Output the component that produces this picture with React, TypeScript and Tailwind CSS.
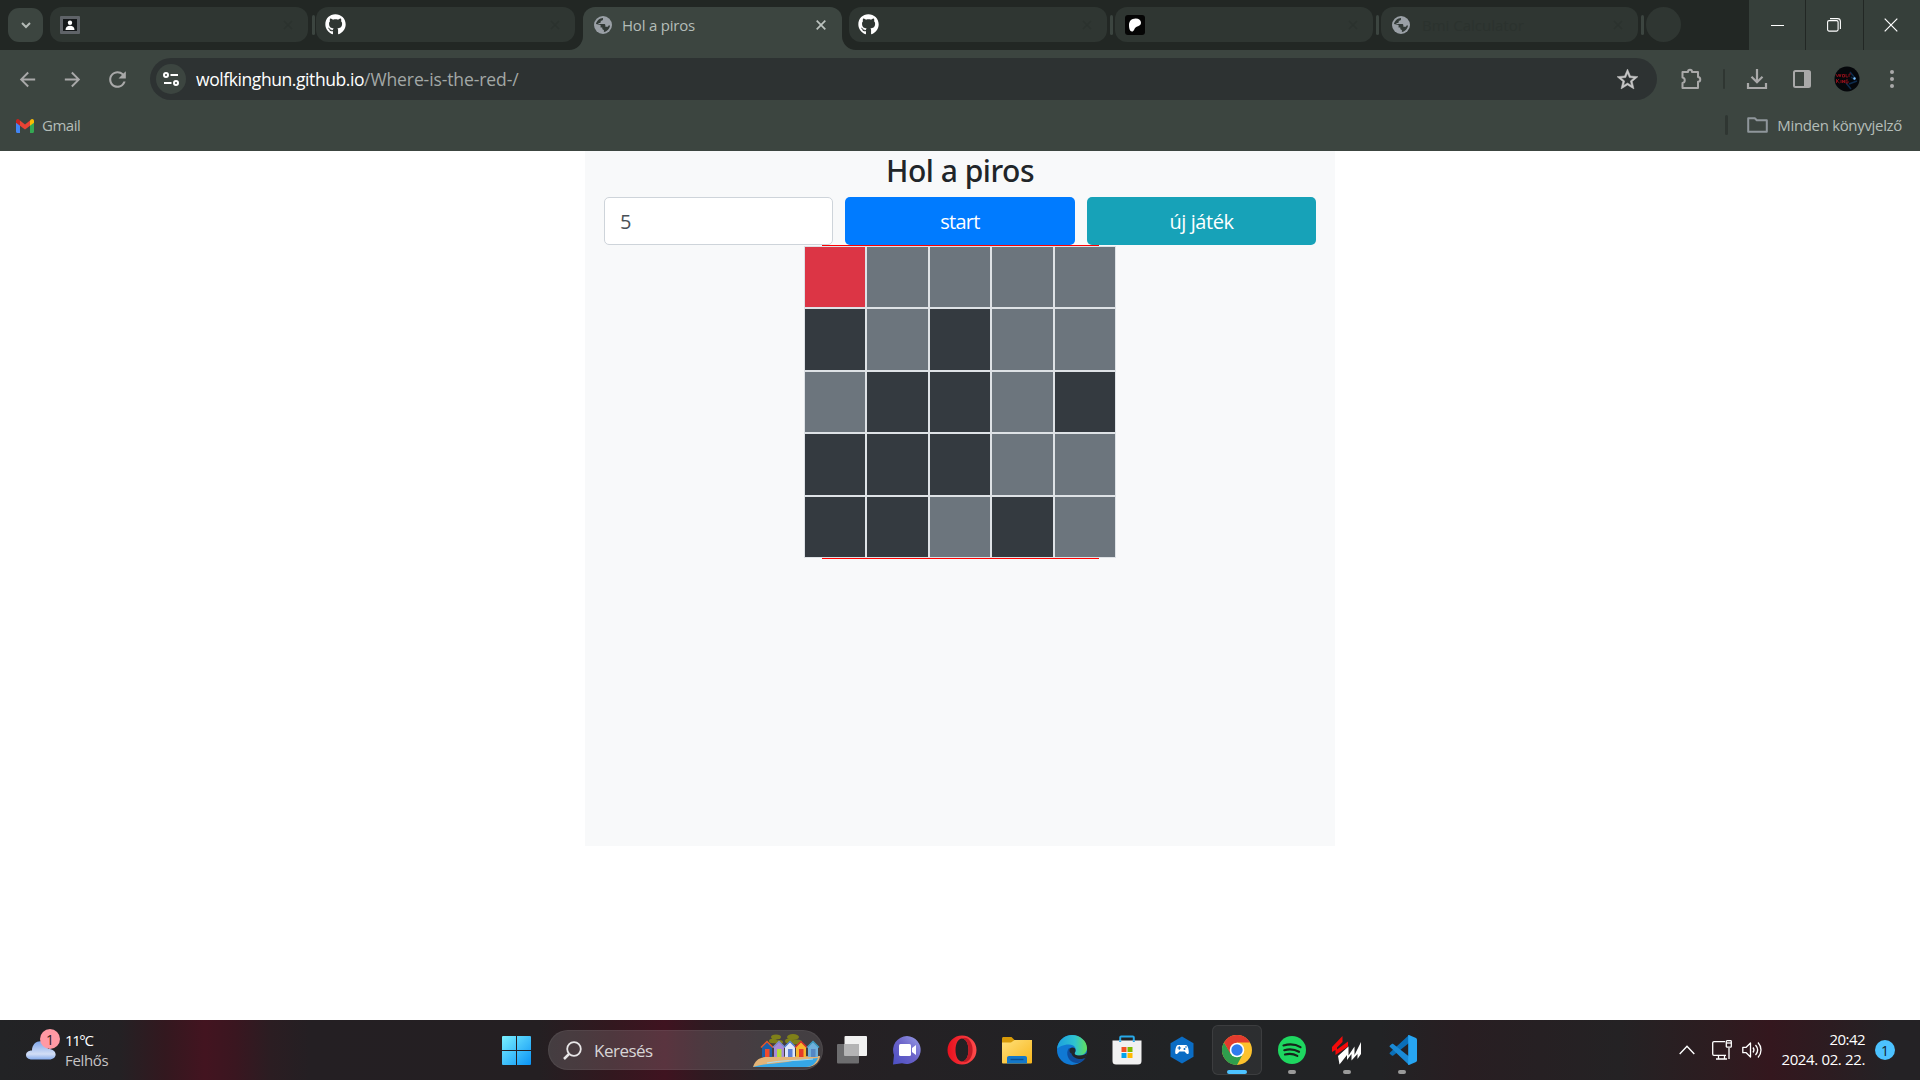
import type { ReactNode } from "react";
import { FaGithub } from "react-icons/fa";
import { MdArrowBack, MdArrowForward, MdRefresh, MdStarOutline } from "react-icons/md";

function Separator() {
  return <div className="h-5 w-[3px] shrink-0 rounded-full bg-[#3c4540]" />;
}

function Globe() {
  return (
    <svg viewBox="0 0 20 20" className="size-[18px] shrink-0">
      <circle cx="10" cy="10" r="10" fill="#9aa0a6" />
      <path
        d="M2.200 8.800C3 5 6.200 2.200 10 2.100v1.600c0 .9-.8 1.500-1.700 1.500H7.500v1.600c0 .6-.5 1-1 1H5v1h6.200c.8 0 1.400.6 1.400 1.400v1.800h2c.8 0 1.500-.6 1.500-1.400h1.700c-.4 3.600-3.200 6.600-6.800 7.200v-2.300c-1 0-1.800-.8-1.800-1.800v-1H7.300V10z"
        fill="#323a36"
      />
    </svg>
  );
}

function Tab({ icon, title, className }: { icon: ReactNode; title?: string; className: string }) {
  return (
    <div className={`flex h-[35px] shrink-0 items-center rounded-xl bg-[#2f3632] ${className}`}>
      {icon}
      {title && <span className="ml-3 pt-0.5 text-[15px] text-[#2b322e]">{title}</span>}
      <svg viewBox="0 0 10 10" className="mr-[15px] ml-auto size-2.5 text-[#2b322e]">
        <path d="M1 1l8 8M9 1l-8 8" stroke="currentColor" strokeWidth="1.6" />
      </svg>
    </div>
  );
}

function TabStrip() {
  return (
    <div className="flex h-[50px] bg-[#222724]">
      <div className="flex flex-1 pt-[7px] pl-2">
        <div className="mt-px flex h-[34px] w-[35px] items-center justify-center rounded-[11px] bg-[#3c4540]">
          <svg viewBox="0 0 10 7" className="h-[7px] w-2.5">
            <path d="M1 1l4 4 4-4" fill="none" stroke="#b4bab6" strokeWidth="2" />
          </svg>
        </div>
        <Tab
          className="ml-[7px] w-[258px] pl-2.5"
          icon={
            <svg viewBox="0 0 20 18" className="h-[18px] w-5">
              <rect width="20" height="18" rx="1" fill="#5f6368" />
              <rect x="3" y="3" width="14" height="12" fill="#15181a" />
              <circle cx="10" cy="6.8" r="2.2" fill="#fff" />
              <path d="M5.500 14c0-3 2-4.300 4.500-4.300s4.500 1.300 4.500 4.300z" fill="#fff" />
            </svg>
          }
        />
        <div className="ml-1 pt-2"><Separator /></div>
        <Tab className="ml-px w-[259px] pl-2.5" icon={<FaGithub className="-mx-px size-[21px] text-white" />} />
        <div className="relative ml-2 flex h-[43px] w-[259px] shrink-0 rounded-t-xl bg-[#3c4540] pr-4 pb-2 pl-[11px]">
          <svg viewBox="0 0 14 14" className="absolute bottom-0 -left-3.5 size-3.5">
            <path d="M14 0A14 14 0 0 1 0 14h14z" fill="#3c4540" />
          </svg>
          <svg viewBox="0 0 14 14" className="absolute -right-3.5 bottom-0 size-3.5">
            <path d="M0 0A14 14 0 0 0 14 14H0z" fill="#3c4540" />
          </svg>
          <div className="flex flex-1 items-center">
            <Globe />
            <span className="ml-2.5 pt-0.5 text-[15px] tracking-[-0.21px] text-[#b4bdb8]">Hol a piros</span>
            <svg viewBox="0 0 10 10" className="ml-auto size-2.5">
              <path d="M.7.7l8.600 8.600M9.300.7L.7 9.300" stroke="#bcc3bf" strokeWidth="1.700" />
            </svg>
          </div>
        </div>
        <Tab className="ml-[7px] w-[258px] pl-2.5" icon={<FaGithub className="-mx-px size-[21px] text-white" />} />
        <div className="ml-[3px] pt-2"><Separator /></div>
        <Tab
          className="ml-0.5 w-[258px] pl-2.5"
          icon={
            <svg viewBox="0 0 20 20" className="size-5">
              <rect width="20" height="20" rx="3" fill="#050505" />
              <path d="M16 7.800c0-2.500-2-4.200-5.200-4.300C6.500 3.400 4 6.200 4 10c0 3.500.8 6.500 3 6.500 2.100 0 2.200-3 3.600-4.100C12.400 11.100 16 11 16 7.800z" fill="#fff" />
            </svg>
          }
        />
        <div className="ml-[3px] pt-2"><Separator /></div>
        <Tab className="ml-0.5 w-[257px] pl-[11px]" title="Bmi Calculator" icon={<Globe />} />
        <div className="ml-[3px] pt-2"><Separator /></div>
        <div className="ml-0.5 size-[35px] shrink-0 rounded-full bg-[#2f3632]" />
      </div>
      <div className="grid w-[171px] grid-cols-[56px_57px_56px] gap-px bg-[#222724]">
        <div className="flex items-center justify-center bg-[#363f3a]">
          <div className="h-px w-[13px] bg-white" />
        </div>
        <div className="flex items-center justify-center bg-[#363f3a] pr-0.5">
          <svg viewBox="0 0 14 14" className="size-3.5" fill="none" stroke="#fff" strokeWidth="1.100">
            <rect x=".6" y="2.600" width="10.500" height="10.500" rx="1.500" />
            <path d="M3 .6h7.500c1.700 0 2.900 1.200 2.900 2.900V11" />
          </svg>
        </div>
        <div className="flex items-center justify-center bg-[#363f3a] pr-0.5">
          <svg viewBox="0 0 14 14" className="size-3.5">
            <path d="M.7.7l12.600 12.600M13.300.7L.7 13.300" stroke="#fff" strokeWidth="1.200" />
          </svg>
        </div>
      </div>
    </div>
  );
}

function Toolbar() {
  return (
    <div className="flex h-[58px] items-center text-[#a9a9a9]">
      <MdArrowBack className="ml-4 size-[23px]" />
      <MdArrowForward className="ml-[22px] size-[23px]" />
      <MdRefresh className="ml-[21px] size-[25px]" />
      <div className="ml-5 flex h-[42px] w-[1507px] items-center rounded-full bg-[#2d3232] pr-[17px] pl-1.5">
        <div className="flex size-[30px] items-center justify-center rounded-full bg-[#3c4540]">
          <svg viewBox="0 0 16 14" className="h-3.5 w-4" fill="none" stroke="#fff" strokeWidth="2">
            <circle cx="3" cy="3" r="2" />
            <path d="M7.500 3H15M1 11h7.500" />
            <circle cx="13" cy="11" r="2" />
          </svg>
        </div>
        <div className="ml-2.5 text-[17.5px] leading-[22px] whitespace-pre">
          <span className="tracking-[-0.42px] text-white">wolfkinghun.github.io</span>
          <span className="tracking-[-0.1px] text-[#a3a8a6]">/Where-is-the-red-/</span>
        </div>
        <MdStarOutline className="ml-auto size-[25px] stroke-[#c7c7c7] stroke-[0.5] text-[#c7c7c7]" />
      </div>
      <svg viewBox="0 0 22 22" className="ml-[23px] size-[22px]" fill="none" stroke="currentColor" strokeWidth="2">
        <path d="M2.500 4h5.500c0-3 4-3 4 0H18v5c3 .2 3 4.600 0 4.800V20H2.500v-5c3-.4 3-5 0-5.400z" strokeLinejoin="round" />
      </svg>
      <div className="ml-[21px] h-5 w-0.5 rounded-full bg-[#2f3632]" />
      <svg viewBox="0 0 22 22" className="ml-[21px] size-[22px]" fill="none" stroke="currentColor" strokeWidth="2.200">
        <path d="M11 1v13M5.500 8.800L11 14.200l5.500-5.400M2 15v5h18v-5" />
      </svg>
      <svg viewBox="0 0 18 18" className="ml-[25px] size-[18px]">
        <rect x="1" y="1" width="16" height="16" rx="1.500" fill="none" stroke="currentColor" strokeWidth="2" />
        <path d="M11 1h6v16h-6z" fill="currentColor" />
      </svg>
      <svg viewBox="0 0 26 26" className="ml-[23px] size-[26px]">
        <circle cx="13" cy="13" r="12.500" fill="#05070b" />
        <path d="M12 17l5 6M16 6l5 6M15 18l8-3M17 11l4 3" stroke="#0e2c4d" strokeWidth="1.500" />
        <circle cx="20.500" cy="12.500" r="1.200" fill="#7cc4ff" />
        <path d="M2 8l1.500 3L5 8l1 3 1-3M8.500 8.500v2.500h2V8.500zM12 8v3h2M15 11V8h2M2.500 13v4M5 13l-2 2 2.500 2M7 14v3M8.500 17v-3l2 3v-3M14 14h-2v3h2v-2" fill="none" stroke="#8f1018" strokeWidth=".9" />
      </svg>
      <svg viewBox="0 0 4 18" className="ml-[30px] h-[18px] w-1" fill="currentColor">
        <circle cx="2" cy="2" r="2" />
        <circle cx="2" cy="9" r="2" />
        <circle cx="2" cy="16" r="2" />
      </svg>
    </div>
  );
}

function BookmarksBar() {
  return (
    <div className="flex h-[43px] items-center pr-[18px] pb-[9px] pl-4 text-[15px] text-[#b4bdb8]">
      <svg viewBox="0 0 18 14" className="mt-px h-3.5 w-[18px]">
        <path d="M0 3v9.500c0 .8.6 1.500 1.300 1.500H4V5z" fill="#4285f4" />
        <path d="M18 3v9.500c0 .8-.6 1.500-1.300 1.500H14V5z" fill="#34a853" />
        <path d="M4 1.500L9 5.500l5-4v5.200L9 10.500 4 6.700z" fill="#ea4335" />
        <path d="M0 2C0 .2 2-.6 3.300.7L4 1.500v5.200L0 3.700z" fill="#c5221f" />
        <path d="M18 2c0-1.800-2-2.600-3.300-1.300l-.7.8v5.200l4-3z" fill="#fbbc04" />
      </svg>
      <span className="mt-px ml-2 tracking-[-0.5px]">Gmail</span>
      <div className="ml-auto h-5 w-[3px] rounded-full bg-[#2f3632]" />
      <svg viewBox="0 0 21 16" className="ml-[19px] h-4 w-[21px]">
        <path d="M1.200 1.200h6.600l2 2h10v11.600H1.200z" fill="none" stroke="#8f969b" strokeWidth="2" strokeLinejoin="round" />
      </svg>
      <span className="mt-px ml-[9px] tracking-[-0.33px]">Minden könyvjelző</span>
    </div>
  );
}

const BOARD = ["RGGGG", "DGDGG", "GDDGD", "DDDGG", "DDGDG"];
const CELL: Record<string, string> = { R: "bg-[#dc3545]", G: "bg-[#6c757d]", D: "bg-[#343a40]" };

function Game() {
  return (
    <div className="mx-auto h-[695px] w-[750px] bg-[#f8f9fa] px-[19px] text-[#212529]">
      <h1 className="pt-0.5 text-center font-['Noto_Sans',sans-serif] text-[30px] leading-9 font-medium tracking-[-0.47px]">Hol a piros</h1>
      <div className="mt-2 grid grid-cols-[229px_230px_229px] gap-3 text-center text-[20px]">
        <div className="flex h-12 items-center rounded-[5px] border border-[#ced4da] bg-white px-[15px] pt-0.5 text-[#495057]">5</div>
        <button className="h-12 rounded-[5px] bg-[#007bff] pt-0.5 tracking-[-0.74px] text-white">start</button>
        <button className="h-12 rounded-[5px] bg-[#17a2b8] pt-0.5 tracking-[-0.43px] text-white">új játék</button>
      </div>
      <div className="mx-auto flex h-[314px] w-[277px] justify-center border-y border-[#ff0000]">
        <div className="grid w-[312px] shrink-0 grid-cols-[60px_61px_60px_61px_60px] grid-rows-[60px_61px_60px_61px_60px] gap-0.5 bg-[#dee2e6] p-px">
          {BOARD.flatMap((row, y) => [...row].map((c, x) => <div key={`${y}-${x}`} className={CELL[c]} />))}
        </div>
      </div>
    </div>
  );
}

function AppSlot({ children, indicator }: { children: ReactNode; indicator?: "active" | "open" }) {
  return (
    <div className="flex w-[55px] shrink-0 items-center justify-center">
      <div
        className={
          indicator === "active"
            ? "relative flex size-[50px] items-center justify-center rounded-md border border-white/8 bg-white/5"
            : "relative flex size-[50px] items-center justify-center"
        }
      >
        {children}
        {indicator === "active" && <div className="absolute bottom-0 h-1 w-5 rounded-full bg-[#4cc2ff]" />}
        {indicator === "open" && <div className="absolute bottom-px h-1 w-2 rounded-full bg-[#9a9a9a]" />}
      </div>
    </div>
  );
}

function BeachHuts() {
  const huts: [number, string, string, string][] = [
    [8, "#1d5fa8", "#f04a2b", "#e5572c"],
    [20, "#a98bd8", "#b4dc3c", "#7e8fd0"],
    [31, "#dfe8fa", "#5b7fd4", "#5b86d6"],
    [42, "#f7b52c", "#e63a2a", "#d8322c"],
    [54, "#6fb0dc", "#5587c4", "#3f9ec4"],
  ];
  return (
    <svg viewBox="0 0 68 36" className="h-9 w-[68px]">
      <path d="M22 9v12M41 9v12" stroke="#6d4b22" strokeWidth="1.500" />
      <g fill="#7f8019">
        <ellipse cx="23" cy="4" rx="5" ry="2.500" />
        <ellipse cx="20" cy="8" rx="4" ry="2.200" />
        <ellipse cx="26" cy="9" rx="4" ry="2" />
        <ellipse cx="40" cy="4" rx="6" ry="3" />
        <ellipse cx="36" cy="8" rx="4" ry="2.500" />
        <ellipse cx="44" cy="9" rx="5" ry="2.500" />
      </g>
      <path d="M0 34C2 28 5 25 12 24l55-1c0 3-3 11-14 11z" fill="#e3b478" />
      <path d="M0 34c12-4 22-3 34-5 10-2 20-3 31-4-2 5-6 9-12 9z" fill="#35a7e6" />
      <path d="M14 30c14-3 30-2 46-4" stroke="#a9dcf2" fill="none" />
      {huts.map(([x, wall, door, roof], i) => (
        <g key={i}>
          <path d={`M${x + 1} 24V14l5-5 5 5v10z`} fill={wall} />
          <path d={`M${x + 4} 24v-8h4.500v8z`} fill={door} />
          <path d={`M${x} 14.500L${x + 6} 8.500l6 6`} fill="none" stroke={roof} strokeWidth="1.500" />
        </g>
      ))}
    </svg>
  );
}

function Taskbar() {
  return (
    <div className="flex h-[60px] bg-[linear-gradient(90deg,#222325_0px,#242124_120px,#33181f_165px,#431420_205px,#3a1620_235px,#2b1d22_270px,#241f23_310px,#241f22_540px,#32181f_610px,#3f1320_665px,#2f1a21_705px,#261f23_760px,#242124_900px,#212325_1180px,#222325_1380px,#281e22_1460px,#242224_1620px,#2d1c20_1720px,#34171e_1770px,#2c1c21_1830px,#242225_1890px)] text-[15px] text-white">
      <div className="flex w-[489px] pl-6">
        <div className="relative mt-5 h-[20px] w-8">
          <svg viewBox="0 0 32 20" className="mt-px h-5 w-8">
            <defs>
              <linearGradient id="cloud" x1="0" y1="0" x2="0" y2="1">
                <stop offset="0" stopColor="#7fa6ea" />
                <stop offset=".7" stopColor="#d3def5" />
                <stop offset="1" stopColor="#86acec" />
              </linearGradient>
            </defs>
            <path d="M8 18.500c-8 0-8-9 0-9C8-2 23-3 24 8c10 0 10 10.500 1 10.500z" fill="url(#cloud)" />
          </svg>
          <div className="absolute -top-[11px] left-4 flex size-5 items-center justify-center rounded-full bg-[#ff99a4] text-[14px] text-[#2b1b1e]">1</div>
        </div>
        <div className="mt-2.5 ml-[9px] leading-5">
          <div className="tracking-[-1.4px]">11°C</div>
          <div className="tracking-[-0.35px] text-[#c6c3c4]">Felhős</div>
        </div>
      </div>
      <AppSlot>
        <svg viewBox="0 0 29 29" className="size-[29px]">
          <defs>
            <linearGradient id="win" x1="0" y1="0" x2="1" y2="1">
              <stop offset="0" stopColor="#7af0ff" />
              <stop offset="1" stopColor="#0a93f5" />
            </linearGradient>
          </defs>
          <path d="M1 0h13v14H0V1a1 1 0 0 1 1-1zM15 0h13a1 1 0 0 1 1 1v13H15zM0 15h14v14H1a1 1 0 0 1-1-1zM15 15h14v13a1 1 0 0 1-1 1H15z" fill="url(#win)" />
        </svg>
      </AppSlot>
      <div className="mt-2.5 ml-1 flex h-10 w-[275px] items-center rounded-full border border-white/5 bg-white/14 pl-3.5">
        <svg viewBox="0 0 19 19" className="size-[19px]" fill="none" stroke="#e8e6e7" strokeWidth="1.800">
          <circle cx="11" cy="8" r="6.800" />
          <path d="M6 13L1 18" strokeWidth="2.500" />
        </svg>
        <span className="ml-3 pt-0.5 text-[17px] tracking-[-0.5px] text-[#d8d5d6]">Keresés</span>
        <div className="mt-0.5 mr-px ml-auto"><BeachHuts /></div>
      </div>
      <div className="ml-px flex">
        <AppSlot>
          <svg viewBox="0 0 30 28" className="h-7 w-[30px]">
            <rect y="8" width="22" height="19.500" rx="1" fill="#6d6d6f" />
            <rect x="7.500" width="22.500" height="20" rx="1" fill="#f1f1f1" />
            <path d="M7.500 8H22v12H7.500z" fill="#b4b4b5" />
          </svg>
        </AppSlot>
        <AppSlot>
          <svg viewBox="0 0 30 30" className="size-[30px]">
            <defs>
              <linearGradient id="chat" x1="0" y1="1" x2="1" y2="0">
                <stop offset="0" stopColor="#4b4fc4" />
                <stop offset=".5" stopColor="#6a62c8" />
                <stop offset="1" stopColor="#9aa0e8" />
              </linearGradient>
            </defs>
            <path d="M15 1a14 14 0 1 1-5 27.200L1 29.500 2 20A14 14 0 0 1 15 1z" fill="url(#chat)" />
            <rect x="7" y="9" width="12" height="12" rx="1.500" fill="#fff" />
            <path d="M20 13l4-3v10l-4-3z" fill="#fff" />
          </svg>
        </AppSlot>
        <AppSlot>
          <svg viewBox="0 0 30 30" className="size-[30px]">
            <defs>
              <linearGradient id="opera" x1="0" y1="0" x2="1" y2="0">
                <stop offset="0" stopColor="#e8101e" />
                <stop offset="1" stopColor="#ff4b4b" />
              </linearGradient>
            </defs>
            <path fillRule="evenodd" d="M15 .5a14.500 14.500 0 1 1 0 29 14.500 14.500 0 0 1 0-29zM15 3.500c-3.800 0-6.500 5-6.500 11.500S11.200 26.500 15 26.500s6.500-5 6.500-11.500S18.800 3.500 15 3.500z" fill="url(#opera)" />
            <path d="M15 3.500c3-1.500 6-.3 8 2.500 3.500 5 3.500 13 0 18-2 2.800-5 4-8 2.500 3.800 0 6.500-5 6.500-11.500S18.800 3.500 15 3.500z" fill="#c01a24" />
          </svg>
        </AppSlot>
        <AppSlot>
          <svg viewBox="0 0 30 27" className="h-[27px] w-[30px]">
            <defs>
              <linearGradient id="folder" x1="0" y1="0" x2="1" y2="1">
                <stop offset="0" stopColor="#ffe07a" />
                <stop offset="1" stopColor="#f8b61c" />
              </linearGradient>
            </defs>
            <path d="M0 1.500C0 .6.600 0 1.500 0h8L13 3.500V8H0z" fill="#d79a08" />
            <path d="M0 5.500h9L12.500 3H30v22.500a1 1 0 0 1-1 1H1a1 1 0 0 1-1-1z" fill="url(#folder)" />
            <path d="M5 26.500V21c0-1.200.8-2 2-2h16c1.200 0 2 .8 2 2v5.500z" fill="#1478c9" />
            <path d="M8.500 22.500h13" stroke="#0b4f91" strokeWidth="1.400" />
          </svg>
        </AppSlot>
        <AppSlot>
          <svg viewBox="0 0 30 30" className="size-[30px]">
            <defs>
              <linearGradient id="edgeTop" x1="0" y1=".5" x2="1" y2=".5">
                <stop offset="0" stopColor="#1b9fe0" />
                <stop offset=".6" stopColor="#2fc3cf" />
                <stop offset="1" stopColor="#62e05a" />
              </linearGradient>
            </defs>
            <circle cx="15" cy="15" r="15" fill="#1079d4" />
            <path d="M12 13c-4 5-1 14 7 15 4 0 8-2 9.500-5-4 2-9 1-11.500-2-2-2.500-1.500-5-.5-6z" fill="#0f4c9c" />
            <path d="M0 14C1 5 8 0 15 0c8 0 15 6 15 13 0 5-4 7.500-8 7.500-3.500 0-5-1.500-4-2.800 2.500-3.700-.5-8.200-6-8.200C6 9.500 1.500 12 0 14z" fill="url(#edgeTop)" />
            <path d="M30 17.500c-1.500 2.200-4.500 3.200-8 3-3 0-5-1.200-4.200-2.500-1-2-3.800-2-3.300.5.600 3.500 5 5.500 9 5.500 2 0 3.700-.5 5-1.300z" fill="#232325" />
            <circle cx="15.500" cy="15.500" r="3" fill="#20262d" />
          </svg>
        </AppSlot>
        <AppSlot>
          <svg viewBox="0 0 30 30" className="size-[30px]">
            <path d="M8.200 8V2.500c0-.6.400-1 1-1h11.600c.6 0 1 .4 1 1V8" fill="none" stroke="#27a9e8" strokeWidth="2" />
            <path d="M.5 5.500h29V26a3.500 3.500 0 0 1-3.500 3.500H4A3.500 3.500 0 0 1 .5 26z" fill="#f1f1f1" />
            <path d="M7.200 5.500h2V7h-2zM20.800 5.500h2V7h-2z" fill="#27a9e8" />
            <path d="M9.500 12h5v5h-5z" fill="#f25022" />
            <path d="M15.500 12h5v5h-5z" fill="#7fba00" />
            <path d="M9.500 18h5v5h-5z" fill="#00a4ef" />
            <path d="M15.500 18h5v5h-5z" fill="#ffb900" />
          </svg>
        </AppSlot>
        <AppSlot>
          <svg viewBox="0 0 24 28" className="h-7 w-6">
            <path d="M12 .5l11.500 6.700v13.600L12 27.500.5 20.800V7.200z" fill="#0a6cc4" />
            <path d="M8 9h8c1.800 0 2.600 4 2.800 7.200 0 2.200-1.800 2.600-3.300.4l-.9-1.200H9.400l-.9 1.200c-1.500 2.200-3.300 1.800-3.300-.4C5.400 13 6.200 9 8 9z" fill="#fff" />
            <path d="M7.500 12h3.600M9.300 10.200v3.600" stroke="#0a6cc4" strokeWidth="1.200" />
            <circle cx="14.500" cy="13" r="1" fill="#0a6cc4" />
            <circle cx="16" cy="11" r=".8" fill="#0a6cc4" />
          </svg>
        </AppSlot>
        <AppSlot indicator="active">
          <svg viewBox="0 0 30 30" className="size-[30px]">
            <circle cx="15" cy="15" r="15" fill="#fdc22d" />
            <path d="M2 7.500l6.800 11.100L15 22l6.200-3.400L15 30A15 15 0 0 1 2 7.500z" fill="#2f9e4d" />
            <path d="M2 7.500A15 15 0 0 1 28 7.500H15v7.500l-6.500 3.700z" fill="#e33b2e" />
            <circle cx="15" cy="15" r="7.300" fill="#fff" />
            <circle cx="15" cy="15" r="5.700" fill="#2f7bee" />
          </svg>
        </AppSlot>
        <AppSlot indicator="open">
          <svg viewBox="0 0 28 28" className="size-7">
            <circle cx="14" cy="14" r="14" fill="#1ed760" />
            <path d="M5.500 9.500c6-1.700 12.500-1 17 1.600M6.300 14.200c5-1.400 10.500-.8 14.700 1.600M7 18.500c4.300-1.100 8.700-.7 12.300 1.400" fill="none" stroke="#16251b" strokeWidth="2.200" strokeLinecap="round" />
          </svg>
        </AppSlot>
        <AppSlot indicator="open">
          <svg viewBox="0 0 30 30" className="size-[30px]">
            <path d="M0 12L10.500 1v6L5 12.500v2L16 6.500v5L3.500 20v-5L0 17z" fill="#f30a0a" />
            <path d="M6 21l10.500-9.500v9l6-9v8.500L29 7v12l-3.500 5v-5l-6 6.500V19l-4.500 6v-5L7.500 29.500z" fill="#fff" />
          </svg>
        </AppSlot>
        <AppSlot indicator="open">
          <svg viewBox="0 0 30 30" className="size-[30px]">
            <path d="M22 0L3 17.500c-.6.500-.6 1 0 1.500l1.800 1.500c.5.400 1 .4 1.500 0L22 8z" fill="#0a6fb8" />
            <path d="M22 30L3 12c-.6-.5-.6-1 0-1.500L4.800 9c.5-.4 1-.4 1.500 0L22 21.500z" fill="#1a8ad6" />
            <path d="M22 0l7 3c.6.300 1 .9 1 1.500v21c0 .6-.4 1.200-1 1.500l-7 3c-.5.200-.8-.1-.8-.6V.6c0-.5.300-.8.800-.6z" fill="#27a5f2" />
          </svg>
        </AppSlot>
      </div>
      <div className="mr-[25px] ml-auto flex items-center">
        <svg viewBox="0 0 16 10" className="h-2.5 w-4">
          <path d="M.7 9L8 1.300 15.300 9" fill="none" stroke="#fff" strokeWidth="1.400" />
        </svg>
        <svg viewBox="0 0 20 20" className="ml-[17px] size-5" fill="none" stroke="#fff" strokeWidth="1.300">
          <path d="M13 1.700H2C1.300 1.700.7 2.200.7 3v11c0 .8.600 1.300 1.300 1.300h12M17 8v11M6.500 15.500v3M12.500 15.500v3M4 19h11" />
          <rect x="14.300" y=".7" width="5" height="6.500" rx=".8" />
          <path d="M14.500 3h5" />
        </svg>
        <svg viewBox="0 0 20 18" className="ml-2.5 h-[18px] w-5" fill="none" stroke="#fff" strokeWidth="1.300" strokeLinejoin="round">
          <path d="M.8 6.300h3.400L8.500 2v14l-4.300-4.300H.8z" />
          <path d="M11 6.500c1.200 1.500 1.200 3.500 0 5M13.500 4c2.600 3 2.600 7 0 10M16 1.500c4 4.400 4 10.600 0 15" />
        </svg>
        <div className="mb-[2px] ml-[19px] w-[84px] text-right leading-5 whitespace-nowrap">
          <div className="tracking-[-0.54px]">20:42</div>
          <div className="tracking-[-0.36px]">2024. 02. 22.</div>
        </div>
        <div className="ml-[10px] flex size-5 items-center justify-center rounded-full bg-[#4cc2ff] text-[14px] text-[#10222c]">1</div>
      </div>
    </div>
  );
}

export default function App() {
  return (
    <div className="flex h-[1080px] w-[1920px] flex-col overflow-hidden bg-white font-['Open_Sans','Noto_Sans',sans-serif]">
      <header className="bg-[#3c4540]">
        <TabStrip />
        <Toolbar />
        <BookmarksBar />
      </header>
      <main className="flex-1">
        <Game />
      </main>
      <Taskbar />
    </div>
  );
}
